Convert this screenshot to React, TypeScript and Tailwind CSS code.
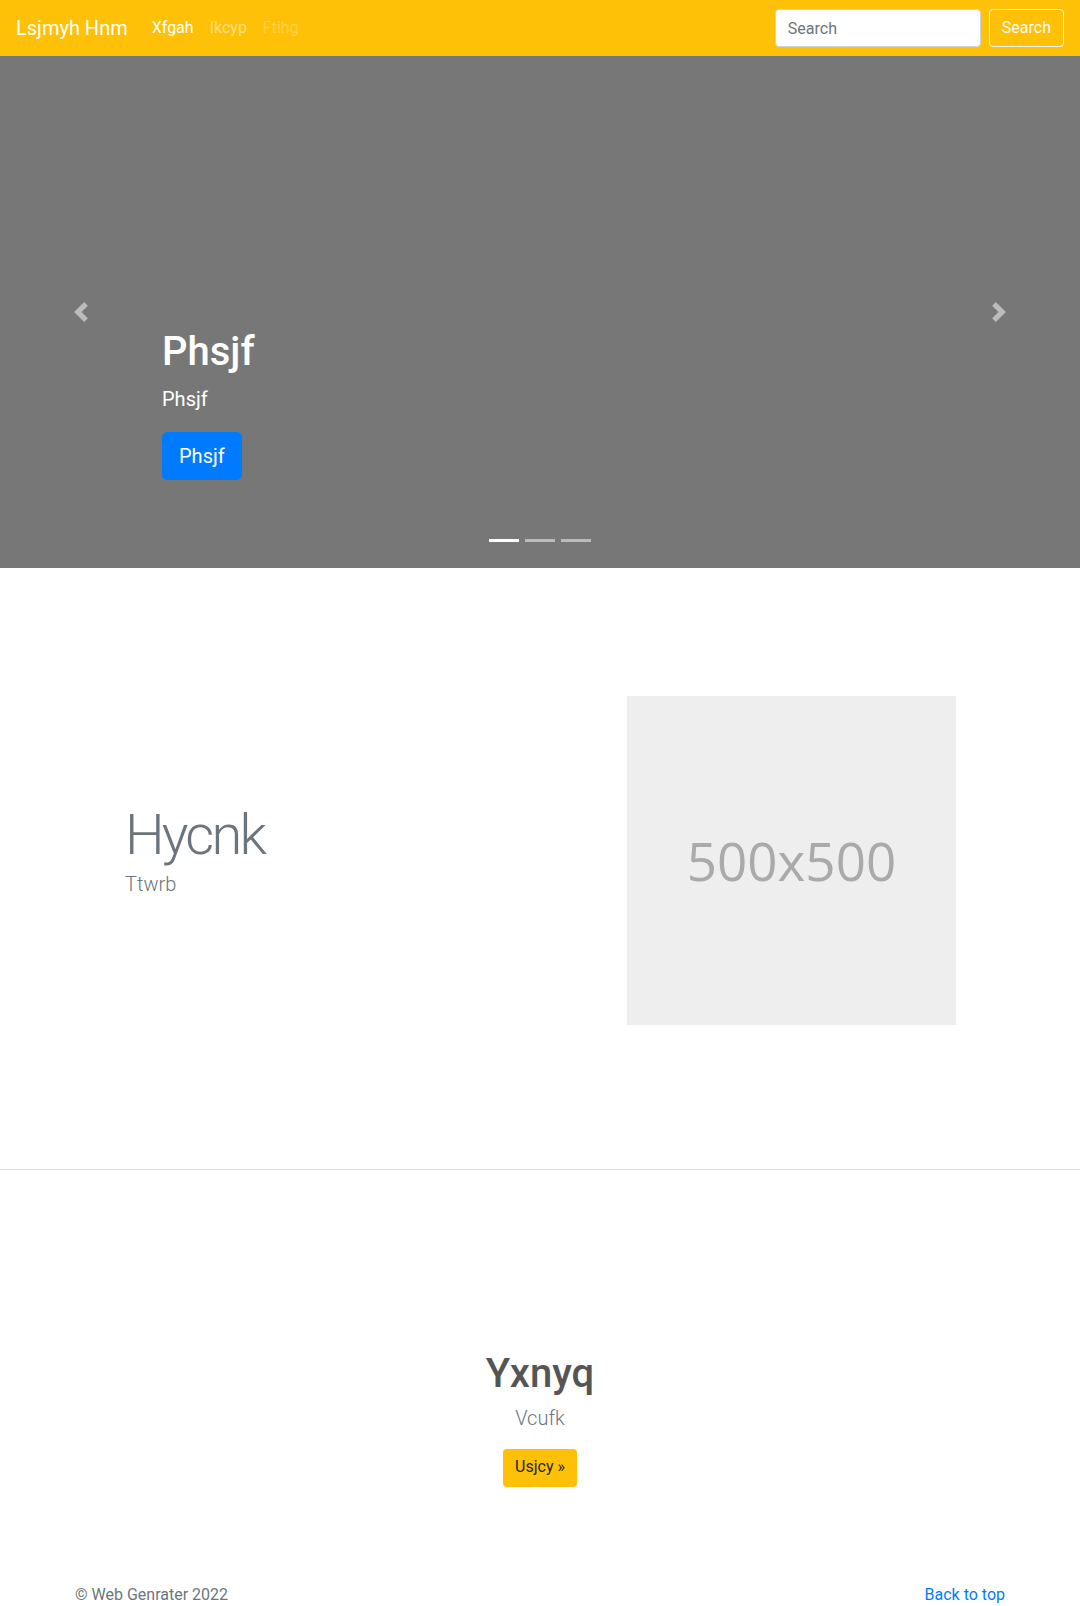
const navLinks = [
  { name: 'Xfgah', className: 'text-white' },
  { name: 'Ikcyp', className: 'text-white/50' },
  { name: 'Ftihg', className: 'text-white/25' },
];

function PrevIcon() {
  return (
    <svg viewBox="0 0 8 8" className="w-5 h-5" fill="#fff">
      <path d="M5.25 0l-4 4 4 4 1.5-1.5-2.5-2.5 2.5-2.5-1.5-1.5z" />
    </svg>
  );
}

function NextIcon() {
  return (
    <svg viewBox="0 0 8 8" className="w-5 h-5" fill="#fff">
      <path d="M2.75 0l-1.5 1.5 2.5 2.5-2.5 2.5 1.5 1.5 4-4-4-4z" />
    </svg>
  );
}

export default function App() {
  return (
    <div className="min-h-screen bg-white font-['Roboto','Noto_Sans',sans-serif] text-[#212529]">
      {/* Navbar */}
      <nav className="h-14 bg-[#ffc107] flex items-center px-4">
        <a href="#" className="text-xl leading-[30px] py-[5px] mr-4 text-white">
          Lsjmyh Hnm
        </a>
        <ul className="flex items-center">
          {navLinks.map((link) => (
            <li key={link.name}>
              <a href="#" className={`block px-2 py-2 text-base leading-6 ${link.className}`}>
                {link.name}
              </a>
            </li>
          ))}
        </ul>
        <form className="ml-auto flex items-center">
          <input
            type="text"
            placeholder="Search"
            className="w-[206px] h-[38px] rounded border border-[#ced4da] bg-white px-3 mr-2 text-base text-[#495057] placeholder:text-[#6c757d] outline-none"
          />
          <button
            type="button"
            className="h-[38px] px-3 rounded border border-[#f8f9fa] text-[#f8f9fa] text-base leading-6"
          >
            Search
          </button>
        </form>
      </nav>

      {/* Carousel */}
      <div className="relative h-[512px] bg-[#777]">
        <div className="absolute left-0 top-0 bottom-0 w-[15%] flex items-center justify-center opacity-50">
          <PrevIcon />
        </div>
        <div className="absolute right-0 top-0 bottom-0 w-[15%] flex items-center justify-center opacity-50">
          <NextIcon />
        </div>

        <div className="absolute left-[15%] right-[15%] bottom-[88px] text-white">
          <h1 className="text-[40px] leading-[1.2] font-medium mb-2">Phsjf</h1>
          <p className="text-xl leading-[30px] mb-[18px]">Phsjf</p>
          <a href="#" className="inline-block h-12 px-4 py-2 rounded-[5px] bg-[#007bff] text-white text-xl leading-[30px] border border-[#007bff]">
            Phsjf
          </a>
        </div>

        <div className="absolute bottom-[26px] left-1/2 -translate-x-1/2 flex gap-[6px]">
          <span className="w-[30px] h-[3px] bg-white" />
          <span className="w-[30px] h-[3px] bg-white/50" />
          <span className="w-[30px] h-[3px] bg-white/50" />
        </div>
      </div>

      {/* Featurette */}
      <section className="flex items-center justify-between pl-[125px] pr-[124px] pt-[128px] pb-[144px]">
        <div className="pb-5">
          <h2 className="text-[56px] leading-[1.2] font-light tracking-[-0.05em] text-[#6c757d]">Hycnk</h2>
          <p className="text-xl leading-[30px] font-light text-[#6c757d]">Ttwrb</p>
        </div>
        <div className="w-[329px] h-[329px] bg-[#eee] flex items-center justify-center font-['Open_Sans',sans-serif] text-[53px] text-[#aaa]">
          500x500
        </div>
      </section>

      <hr className="border-t border-[#e3e3e3]" />

      {/* Jumbotron */}
      <section className="pt-[180px] text-center">
        <h1 className="text-[40px] leading-[1.2] font-medium text-[#555] mb-[5px]">Yxnyq</h1>
        <p className="text-xl leading-[30px] font-light text-[#6c757d] mb-4">Vcufk</p>
        <a href="#" className="inline-block h-[38px] px-3 py-[6px] rounded bg-[#ffc107] text-[#212529] text-base leading-6">
          Usjcy »
        </a>
      </section>

      {/* Footer */}
      <footer className="pt-[96px] pb-12">
        <div className="w-[930px] mx-auto flex justify-between text-base leading-6">
          <p className="text-[#6c757d]">© Web Genrater 2022</p>
          <a href="#" className="text-[#007bff]">Back to top</a>
        </div>
      </footer>
    </div>
  );
}
